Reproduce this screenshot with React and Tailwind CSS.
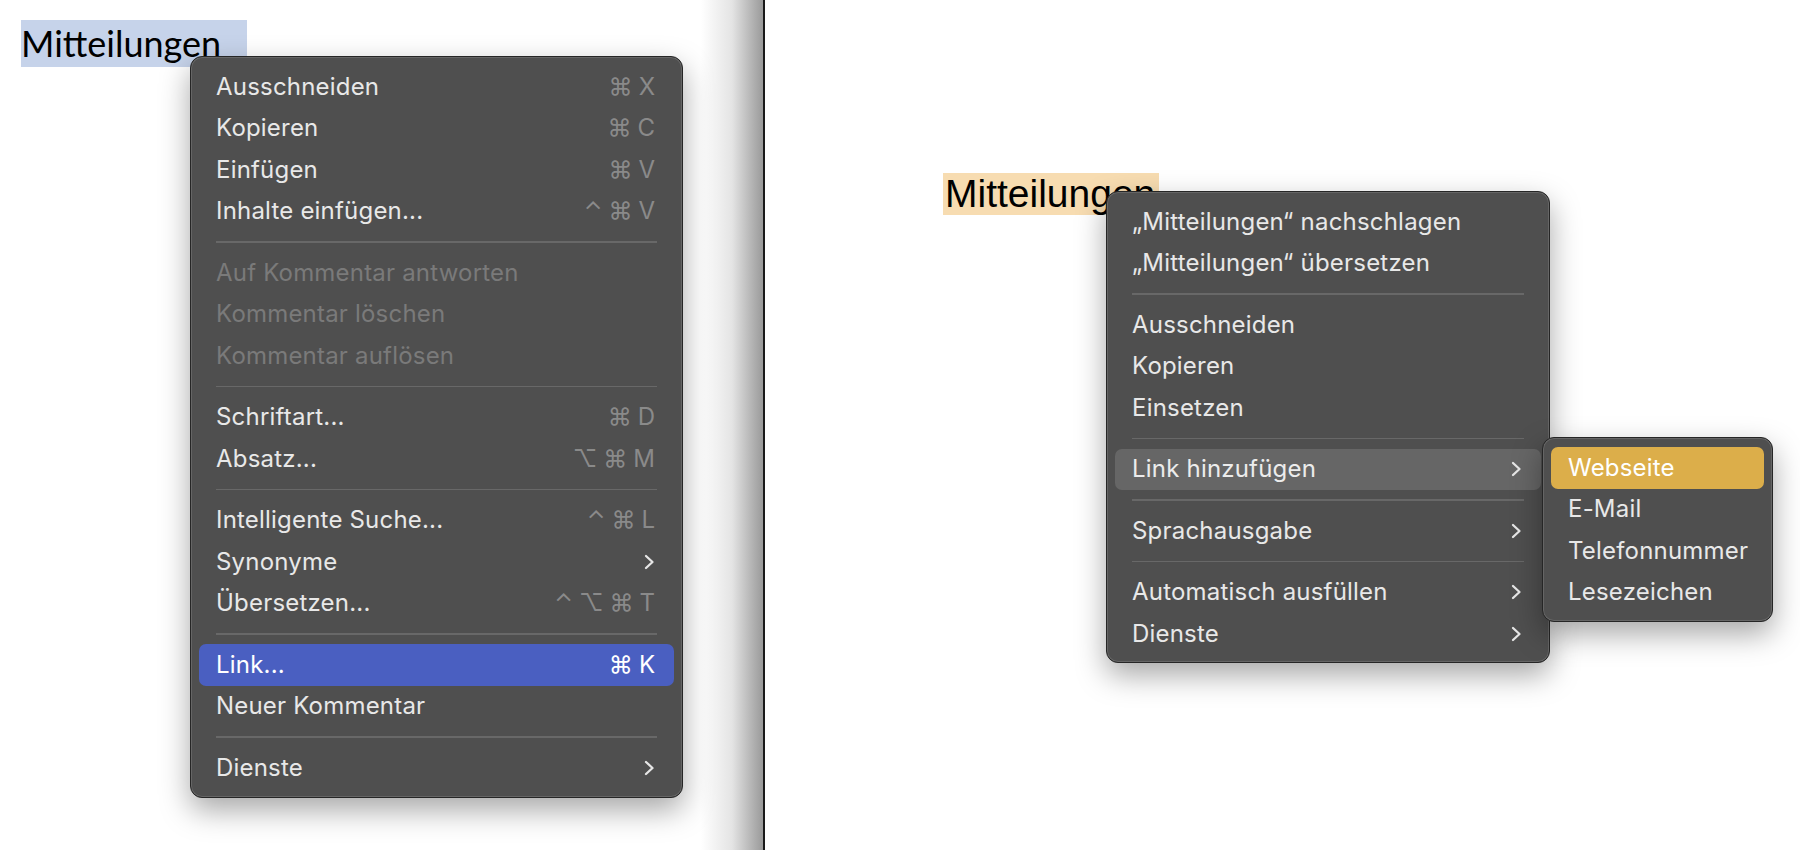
import React from 'react';

const menuFont = { fontFamily: 'Inter, "Liberation Sans", "DejaVu Sans", sans-serif' };

const Chevron = () => (
    <svg width="12" height="16" viewBox="0 0 12 16" className="shrink-0">
        <path d="M3 2 L9.5 8 L3 14" fill="none" stroke="#e6e6e6" strokeWidth="2.3" strokeLinecap="round" strokeLinejoin="round" />
    </svg>
);

const Sep = () => (
    <div className="h-[20px] flex flex-col px-[17px]">
        <div className="h-[9px]" />
        <div className="h-[1.5px] bg-[#686868]" />
    </div>
);

const Item = ({ label, shortcut, sub, disabled, active }) => (
    <div
        className={
            'h-[41.5px] flex items-center justify-between pl-[17px] pr-[19px] rounded-[7px] ' +
            (active === 'blue' ? 'bg-[#4a5fc1] text-white' : active === 'gray' ? 'bg-[#666666] text-[#ececec]' : active === 'gold' ? 'bg-[#dcae4a] text-white' : disabled ? 'text-[#7a7a7a]' : 'text-[#e8e8e8]')
        }
    >
        <span className="whitespace-nowrap tracking-[0.2px]">{label}</span>
        {shortcut && (
            <span className={'whitespace-nowrap flex items-center gap-[6px] ' + (active === 'blue' ? 'text-white' : 'text-[#8a8a8a]')}>
                {shortcut.map((k, i) => (
                    <span key={i}>{k}</span>
                ))}
            </span>
        )}
        {sub && <Chevron />}
    </div>
);

const menuBox = 'absolute bg-[#4f4f4f] border border-[#262626] rounded-[12px] shadow-[0_12px_30px_rgba(0,0,0,0.35),inset_0_0_0_1px_rgba(255,255,255,0.13)] text-[24px] px-[8px]';

export default function App() {
    return (
        <div className="w-[1800px] h-[850px] flex bg-white overflow-hidden relative" style={menuFont}>
            {/* left window */}
            <div className="w-[765px] h-full flex">
                <div className="flex-1 bg-white pt-[20px] pl-[21px]">
                    <span
                        className="inline-block bg-[#c6d3ea] text-black text-[36px] leading-[47px] pr-[26px]"
                        style={{ fontFamily: 'Lato, "Open Sans", sans-serif' }}
                    >
                        Mitteilungen
                    </span>
                </div>
                <div className="w-[62px] h-full bg-gradient-to-r from-white via-[#e4e4e4] to-[#9a9a9a]" />
                <div className="w-[2px] h-full bg-[#1a1a1a]" />
            </div>

            {/* right window */}
            <div className="flex-1 bg-white pt-[173px] pl-[178px]">
                <span
                    className="inline-block bg-[#f7dcb1] text-black text-[39px] leading-[42px] pl-[2px] pr-[4px]"
                    style={{ fontFamily: '"Liberation Sans", Arial, sans-serif' }}
                >
                    Mitteilungen
                </span>
            </div>

            {/* left context menu */}
            <div className={menuBox + ' left-[190px] top-[56px] w-[493px] pt-[9px] pb-[8px]'}>
                <Item label="Ausschneiden" shortcut={['⌘', 'X']} />
                <Item label="Kopieren" shortcut={['⌘', 'C']} />
                <Item label="Einfügen" shortcut={['⌘', 'V']} />
                <Item label="Inhalte einfügen..." shortcut={['⌃', '⌘', 'V']} />
                <Sep />
                <Item label="Auf Kommentar antworten" disabled />
                <Item label="Kommentar löschen" disabled />
                <Item label="Kommentar auflösen" disabled />
                <Sep />
                <Item label="Schriftart..." shortcut={['⌘', 'D']} />
                <Item label="Absatz..." shortcut={['⌥', '⌘', 'M']} />
                <Sep />
                <Item label="Intelligente Suche..." shortcut={['⌃', '⌘', 'L']} />
                <Item label="Synonyme" sub />
                <Item label="Übersetzen..." shortcut={['⌃', '⌥', '⌘', 'T']} />
                <Sep />
                <Item label="Link..." shortcut={['⌘', 'K']} active="blue" />
                <Item label="Neuer Kommentar" />
                <Sep />
                <Item label="Dienste" sub />
            </div>

            {/* right context menu */}
            <div className={menuBox + ' left-[1106px] top-[191px] w-[444px] pt-[9px] pb-[7px]'}>
                <Item label="„Mitteilungen“ nachschlagen" />
                <Item label="„Mitteilungen“ übersetzen" />
                <Sep />
                <Item label="Ausschneiden" />
                <Item label="Kopieren" />
                <Item label="Einsetzen" />
                <Sep />
                <Item label="Link hinzufügen" sub active="gray" />
                <Sep />
                <Item label="Sprachausgabe" sub />
                <Sep />
                <Item label="Automatisch ausfüllen" sub />
                <Item label="Dienste" sub />
            </div>

            {/* submenu */}
            <div className={menuBox + ' left-[1542px] top-[437px] w-[231px] pt-[9px] pb-[8px] rounded-[10px]'}>
                <Item label="Webseite" active="gold" />
                <Item label="E-Mail" />
                <Item label="Telefonnummer" />
                <Item label="Lesezeichen" />
            </div>
        </div>
    );
}
